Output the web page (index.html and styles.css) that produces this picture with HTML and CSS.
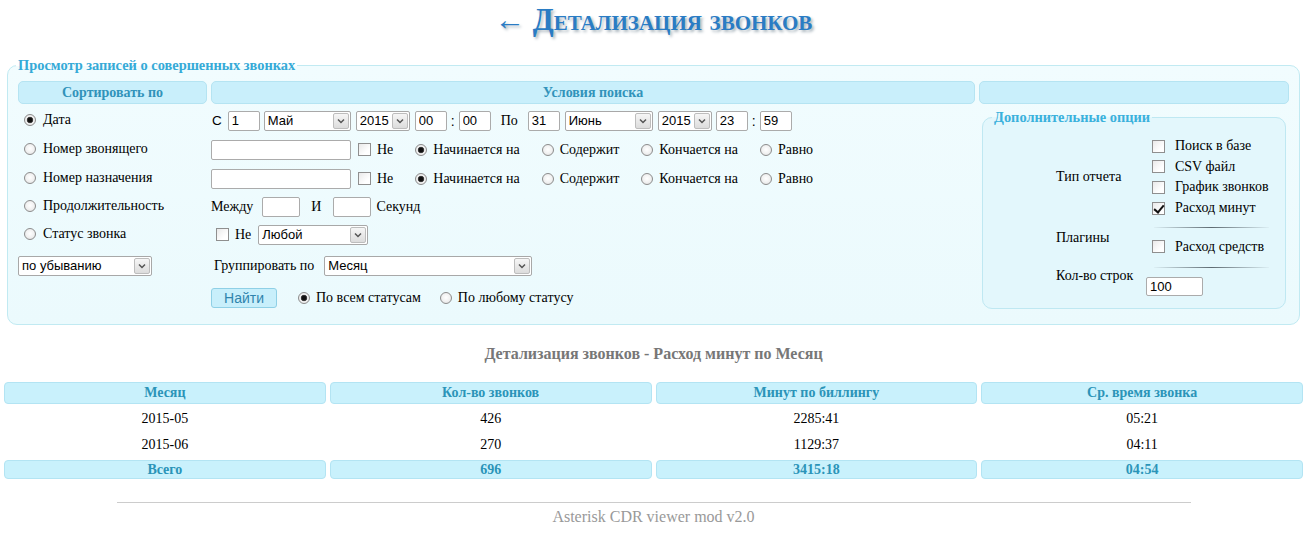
FILE: index.html
```html
<!DOCTYPE html>
<html lang="ru">
<head>
<meta charset="utf-8">
<title>Детализация звонков</title>
<link rel="stylesheet" href="styles.css">
</head>
<body>
<h1 class="title"><a href="#">← Детализация звонков</a></h1>

<form class="search-form">
<fieldset class="search">
  <legend>Просмотр записей о совершенных звонках</legend>
  <table class="form-table">
    <colgroup><col class="c1"><col class="c2"><col class="c3"></colgroup>
    <tr class="hdr"><th>Сортировать по</th><th>Условия поиска</th><th></th></tr>
    <tr class="r1">
      <td><label class="rl"><input type="radio" name="order" checked> Дата</label></td>
      <td>
        <div class="line">
          <span class="sans">С</span>
          <input class="inp w32 ml7" type="text" value="1">
          <span class="sel w87"><select><option>Май</option></select><span class="arr"><svg viewBox="0 0 14 14"><path d="M4 5.5 7 8.5 10 5.5"/></svg></span></span>
          <span class="sel w54 ml1"><select><option>2015</option></select><span class="arr"><svg viewBox="0 0 14 14"><path d="M4 5.5 7 8.5 10 5.5"/></svg></span></span>
          <input class="inp w32 ml1" type="text" value="00">
          <span class="colon">:</span>
          <input class="inp w32" type="text" value="00">
          <span class="po">По</span>
          <input class="inp w32" type="text" value="31">
          <span class="sel w88 ml1"><select><option>Июнь</option></select><span class="arr"><svg viewBox="0 0 14 14"><path d="M4 5.5 7 8.5 10 5.5"/></svg></span></span>
          <span class="sel w54 ml1"><select><option>2015</option></select><span class="arr"><svg viewBox="0 0 14 14"><path d="M4 5.5 7 8.5 10 5.5"/></svg></span></span>
          <input class="inp w32" type="text" value="23">
          <span class="colon">:</span>
          <input class="inp w32" type="text" value="59">
        </div>
      </td>
      <td rowspan="7" class="opt-cell">
        <fieldset class="opts">
          <legend>Дополнительные опции</legend>
          <div class="opt-grid">
            <div class="opt-label">Тип отчета</div>
            <div class="opt-items first">
              <label class="ci"><input type="checkbox"> Поиск в базе</label>
              <label class="ci"><input type="checkbox"> CSV файл</label>
              <label class="ci"><input type="checkbox"> График звонков</label>
              <label class="ci"><input type="checkbox" checked> Расход минут</label>
            </div>
            <div class="opt-label">Плагины</div>
            <div class="opt-items">
              <div class="sep"></div>
              <label class="ci"><input type="checkbox"> Расход средств</label>
            </div>
            <div class="opt-label">Кол-во строк</div>
            <div class="opt-items">
              <div class="sep sep-last"></div>
              <input class="inp rows" type="text" value="100">
            </div>
          </div>
        </fieldset>
      </td>
    </tr>
    <tr class="r2">
      <td><label class="rl"><input type="radio" name="order"> Номер звонящего</label></td>
      <td>
        <div class="line">
          <input class="inp w140" type="text">
          <label class="grp ne"><input type="checkbox"> Не</label>
          <label class="grp"><input type="radio" name="s1" checked> Начинается на</label>
          <label class="grp"><input type="radio" name="s1"> Содержит</label>
          <label class="grp"><input type="radio" name="s1"> Кончается на</label>
          <label class="grp"><input type="radio" name="s1"> Равно</label>
        </div>
      </td>
    </tr>
    <tr class="r3">
      <td><label class="rl"><input type="radio" name="order"> Номер назначения</label></td>
      <td>
        <div class="line">
          <input class="inp w140" type="text">
          <label class="grp ne"><input type="checkbox"> Не</label>
          <label class="grp"><input type="radio" name="s2" checked> Начинается на</label>
          <label class="grp"><input type="radio" name="s2"> Содержит</label>
          <label class="grp"><input type="radio" name="s2"> Кончается на</label>
          <label class="grp"><input type="radio" name="s2"> Равно</label>
        </div>
      </td>
    </tr>
    <tr class="r4">
      <td><label class="rl"><input type="radio" name="order"> Продолжительность</label></td>
      <td>
        <div class="line dur">
          <span>Между</span>
          <input class="inp w38" type="text">
          <span class="and">И</span>
          <input class="inp w38" type="text">
          <span class="sec">Секунд</span>
        </div>
      </td>
    </tr>
    <tr class="r5">
      <td><label class="rl"><input type="radio" name="order"> Статус звонка</label></td>
      <td>
        <div class="line status">
          <label class="grp"><input type="checkbox"> Не</label>
          <span class="sel w110"><select><option>Любой</option></select><span class="arr"><svg viewBox="0 0 14 14"><path d="M4 5.5 7 8.5 10 5.5"/></svg></span></span>
        </div>
      </td>
    </tr>
    <tr class="r6">
      <td><span class="sel w134"><select><option>по убыванию</option></select><span class="arr"><svg viewBox="0 0 14 14"><path d="M4 5.5 7 8.5 10 5.5"/></svg></span></span></td>
      <td>
        <div class="line group">
          <span>Группировать по</span>
          <span class="sel w208"><select><option>Месяц</option></select><span class="arr"><svg viewBox="0 0 14 14"><path d="M4 5.5 7 8.5 10 5.5"/></svg></span></span>
        </div>
      </td>
    </tr>
    <tr class="r7">
      <td></td>
      <td>
        <div class="line submit">
          <button type="button" class="btn">Найти</button>
          <label class="grp"><input type="radio" name="st" checked> По всем статусам</label>
          <label class="grp"><input type="radio" name="st"> По любому статусу</label>
        </div>
      </td>
    </tr>
  </table>
</fieldset>
</form>

<p class="caption">Детализация звонков - Расход минут по Месяц</p>

<table class="results">
  <tr class="rh"><th>Месяц</th><th>Кол-во звонков</th><th>Минут по биллингу</th><th>Ср. время звонка</th></tr>
  <tr class="rd"><td>2015-05</td><td>426</td><td>2285:41</td><td>05:21</td></tr>
  <tr class="rd"><td>2015-06</td><td>270</td><td>1129:37</td><td>04:11</td></tr>
  <tr class="rt"><th>Всего</th><th>696</th><th>3415:18</th><th>04:54</th></tr>
</table>

<hr class="rule">
<div class="footer">Asterisk CDR viewer mod v2.0</div>
</body>
</html>
```
FILE: styles.css
```css
* { box-sizing: border-box; }
body {
  margin: 0;
  font-family: "Liberation Serif", "Times New Roman", serif;
  font-size: 14px;
  color: #000;
  background: #fff;
}
.title {
  margin: 0 0 17px;
  height: 40px;
  line-height: 40px;
  text-align: center;
  font-size: 30.5px;
  font-weight: bold;
  font-variant: small-caps;
}
.title a {
  color: #2a7cc4;
  text-decoration: none;
  text-shadow: 2px 2px 3px #a8b4bc;
}
.search-form { margin: 0; }
.search {
  margin: 0 7px;
  padding: 0 6px 9px;
  border: 1px solid #c1eaf2;
  border-radius: 10px;
  background: linear-gradient(#f1fcfe, #ebfafd);
  min-width: 0;
}
.search > legend, .opts > legend {
  padding: 0 2px;
  margin-left: 2px;
  font-weight: bold;
  font-size: 14.4px;
  line-height: 16px;
  color: #36aad7;
}
.form-table {
  width: 100%;
  table-layout: fixed;
  border-spacing: 4px;
  margin-top: 4px;
}
.c1 { width: 189px; }
.c2 { width: 764px; }
.form-table th {
  height: 23px;
  padding: 0;
  background: #c9effb;
  border: 1px solid #b5e4f2;
  border-radius: 5px;
  color: #3193ba;
  font-weight: bold;
  font-size: 14px;
}
.form-table td { padding: 0; vertical-align: middle; white-space: nowrap; }
.r1 > td, .r2 > td, .r3 > td { height: 25px; }
.r4 > td { height: 23px; }
.r5 > td { height: 25px; }
.r6 > td { height: 29px; }
.r7 > td { height: 27px; }
.form-table td.opt-cell { vertical-align: top; }

.line { display: flex; align-items: center; gap: 4px; }
.sans { font-family: "Liberation Sans", Arial, sans-serif; font-size: 13.5px; margin-left: 1px; }
.ml7 { margin-left: 2px; }
.ml1 { margin-left: 1px; }
.colon { font-family: "Liberation Sans", Arial, sans-serif; margin: 0; }
.po { margin: 0 6px; }

.rl { display: inline-flex; align-items: center; gap: 7px; margin-left: 6px; }

.inp {
  height: 20px;
  border: 1px solid #ababab;
  border-radius: 2px;
  padding: 0 3px;
  font-family: "Liberation Sans", Arial, sans-serif;
  font-size: 13px;
  background: #fff;
  color: #000;
}
.w32 { width: 32px; }
.w38 { width: 38px; }
.w140 { width: 140px; }

.sel { position: relative; display: inline-block; height: 20px; }
.w54 { width: 54px; }
.w87 { width: 87px; }
.w88 { width: 88px; }
.w110 { width: 110px; }
.w134 { width: 134px; }
.w208 { width: 208px; }
.sel select {
  appearance: none;
  -webkit-appearance: none;
  width: 100%;
  height: 20px;
  margin: 0;
  border: 1px solid #a8a8a8;
  border-radius: 2px;
  background: #fff;
  padding: 0 3px;
  font-family: "Liberation Sans", Arial, sans-serif;
  font-size: 13px;
  color: #000;
}
.sel .arr {
  position: absolute;
  right: 2px;
  top: 2px;
  width: 16px;
  height: 16px;
  border: 1px solid #bdbdbd;
  border-radius: 2px;
  background: linear-gradient(#f6f6f6, #dcdcdc);
  pointer-events: none;
  display: flex;
}
.sel .arr svg { width: 14px; height: 14px; }
.sel .arr path { fill: none; stroke: #555; stroke-width: 1.5; }

input[type=radio] {
  appearance: none;
  -webkit-appearance: none;
  width: 12px;
  height: 12px;
  margin: 0;
  border: 1px solid #8c8c8c;
  border-radius: 50%;
  background: radial-gradient(circle at 50% 45%, #ffffff 0, #f2f2f2 50%, #dcdcdc 100%);
  flex: none;
}
input[type=radio]:checked {
  background: radial-gradient(circle, #111 0, #111 2px, #555 3px, #f4f4f4 3.6px, #dcdcdc 100%);
}
input[type=checkbox] {
  appearance: none;
  -webkit-appearance: none;
  position: relative;
  width: 13px;
  height: 13px;
  margin: 0;
  border: 1px solid #8f8f8f;
  background: linear-gradient(135deg, #e9e9e9, #ffffff 70%);
  flex: none;
}
input[type=checkbox]:checked::after {
  content: "";
  position: absolute;
  left: 3px;
  top: 0;
  width: 4px;
  height: 8px;
  border-right: 2px solid #111;
  border-bottom: 2px solid #111;
  transform: rotate(40deg);
}

.grp { display: inline-flex; align-items: center; gap: 6px; margin-left: 18px; }
.ne { margin-left: 3px; }
.dur { gap: 9px; }
.dur .and { margin: 0 3px 0 2px; }
.dur .sec { margin-left: -4px; }
.status .grp { margin-left: 5px; }
.status .sel { margin-left: 3px; }
.group span:first-child { margin-left: 3px; }
.group .sel { margin-left: 6px; }

.btn {
  width: 66px;
  height: 20px;
  padding: 0;
  border: 1px solid #8fd0e6;
  border-radius: 3px;
  background: #c8effb;
  color: #2f84ad;
  font-family: "Liberation Sans", Arial, sans-serif;
  font-size: 14px;
}
.submit .grp:first-of-type { margin-left: 17px; }
.submit .grp { margin-left: 15px; }

.opts {
  margin: 1px 3px 0;
  padding: 0 8px 12px;
  border: 1px solid #bfe8f2;
  border-radius: 10px;
  background: #e3f7fc;
  min-width: 0;
}
.opts > legend { color: #3ab1dc; margin-left: 1px; }
.opt-grid {
  display: grid;
  grid-template-columns: 90px 130px;
  margin: 11px 0 0 65px;
  align-items: center;
}
.opt-label { white-space: nowrap; }
.opt-items { display: flex; flex-direction: column; }
.ci { display: flex; align-items: center; gap: 10px; height: 20.6px; margin-left: 6px; }
.sep {
  height: 1px;
  margin: 9px 0 0 8px;
  width: 115px;
  background: linear-gradient(to right, rgba(90,100,110,0.05), #5e6b72 50%, rgba(90,100,110,0.05));
}
.sep-last { margin-top: 10px; }
.opt-items .sep + .ci { margin-top: 8px; }
.opt-items .sep + .rows { margin-top: 9px; }
.rows { width: 57px; height: 19px; }

.caption {
  margin: 20px 0 0;
  line-height: 18px;
  text-align: center;
  font-weight: bold;
  font-size: 16px;
  color: #777;
}
.results {
  width: 100%;
  table-layout: fixed;
  border-spacing: 4px;
  margin-top: 15px;
}
.results th {
  padding: 0;
  background: #c9f1fc;
  border: 1px solid #b3e4f3;
  border-radius: 4px;
  color: #2b94b8;
  font-weight: bold;
  font-size: 14px;
}
.results .rh th { height: 22px; }
.results .rt th { height: 19px; }
.results td { height: 22px; padding: 0; text-align: center; }
.results .rd:first-of-type td { padding-top: 2px; }
.rule {
  width: 1074px;
  height: 0;
  margin: 19px auto 0;
  border: 0;
  border-top: 1px solid #cccccc;
}
.footer {
  margin-top: 4px;
  text-align: center;
  font-size: 16px;
  line-height: 20px;
  color: #999;
}
```
